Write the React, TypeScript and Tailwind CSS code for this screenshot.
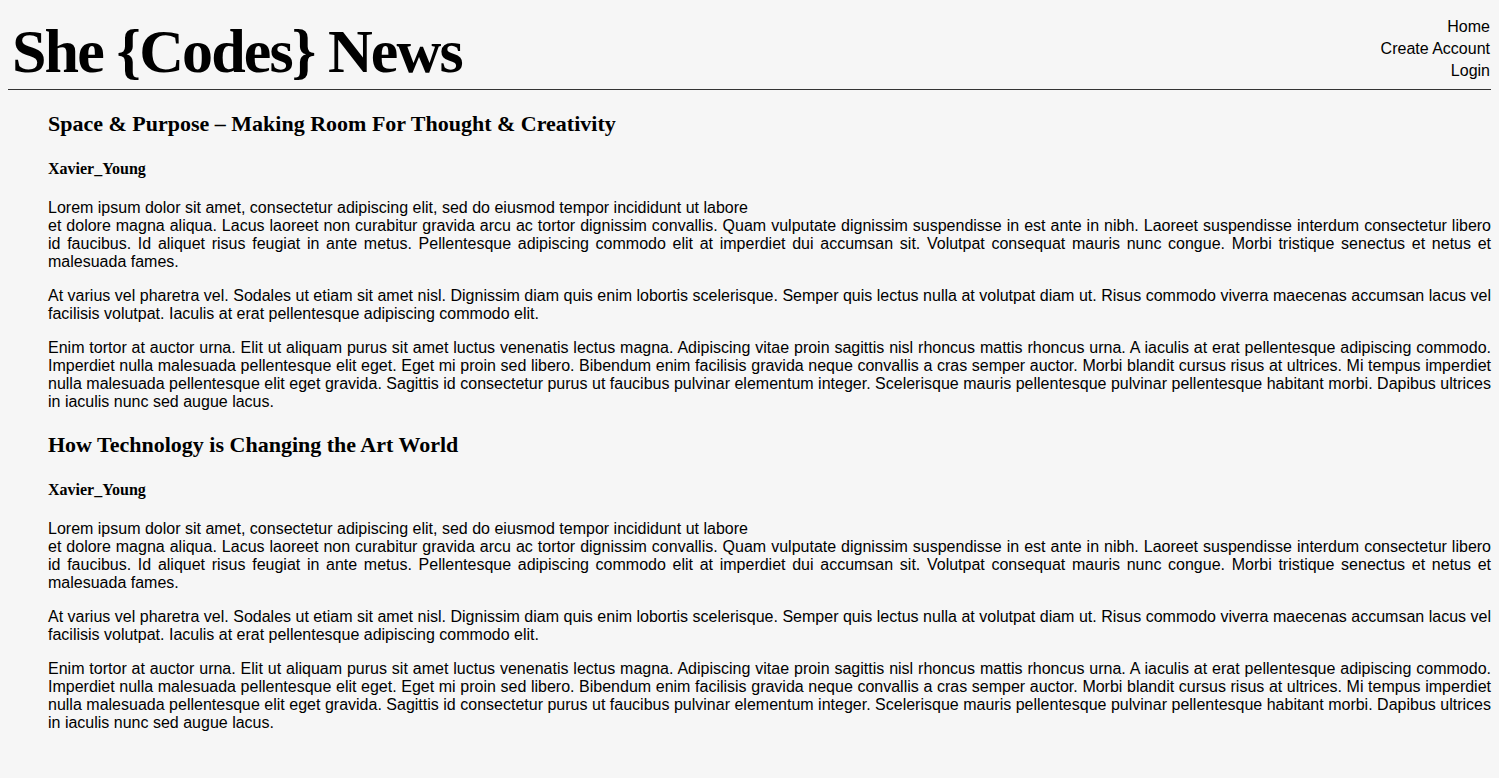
const lorem1a = "Lorem ipsum dolor sit amet, consectetur adipiscing elit, sed do eiusmod tempor incididunt ut labore"
const lorem1b = "et dolore magna aliqua. Lacus laoreet non curabitur gravida arcu ac tortor dignissim convallis. Quam vulputate dignissim suspendisse in est ante in nibh. Laoreet suspendisse interdum consectetur libero id faucibus. Id aliquet risus feugiat in ante metus. Pellentesque adipiscing commodo elit at imperdiet dui accumsan sit. Volutpat consequat mauris nunc congue. Morbi tristique senectus et netus et malesuada fames."
const lorem2 = "At varius vel pharetra vel. Sodales ut etiam sit amet nisl. Dignissim diam quis enim lobortis scelerisque. Semper quis lectus nulla at volutpat diam ut. Risus commodo viverra maecenas accumsan lacus vel facilisis volutpat. Iaculis at erat pellentesque adipiscing commodo elit."
const lorem3 = "Enim tortor at auctor urna. Elit ut aliquam purus sit amet luctus venenatis lectus magna. Adipiscing vitae proin sagittis nisl rhoncus mattis rhoncus urna. A iaculis at erat pellentesque adipiscing commodo. Imperdiet nulla malesuada pellentesque elit eget. Eget mi proin sed libero. Bibendum enim facilisis gravida neque convallis a cras semper auctor. Morbi blandit cursus risus at ultrices. Mi tempus imperdiet nulla malesuada pellentesque elit eget gravida. Sagittis id consectetur purus ut faucibus pulvinar elementum integer. Scelerisque mauris pellentesque pulvinar pellentesque habitant morbi. Dapibus ultrices in iaculis nunc sed augue lacus."

const posts = [
  { id: 1, title: "Space & Purpose – Making Room For Thought & Creativity", author: "Xavier_Young" },
  { id: 2, title: "How Technology is Changing the Art World", author: "Xavier_Young" },
]

const Nav = () => {
  return (
    <nav className="pr-px flex flex-col items-end text-[16px] leading-[22px] text-black font-['Liberation_Sans',Arial,sans-serif]">
      <a href="#">Home</a>
      <a href="#">Create Account</a>
      <a href="#">Login</a>
    </nav>
  )
}

const Post = ({ title, author }: { title: string; author: string }) => {
  return (
    <article>
      <h2 className="mt-[22px] text-[22px] leading-[24px] font-bold font-['Liberation_Serif','Times_New_Roman',serif]">
        {title}
      </h2>
      <h4 className="mt-[24px] text-[16px] leading-[18px] font-bold font-['Liberation_Serif','Times_New_Roman',serif]">
        {author}
      </h4>
      <div className="mt-[21px] text-[16px] leading-[18px] text-justify font-['Liberation_Sans',Arial,sans-serif]">
        <p>
          {lorem1a}
          <br />
          {lorem1b}
        </p>
        <p className="mt-4">{lorem2}</p>
        <p className="mt-4">{lorem3}</p>
      </div>
    </article>
  )
}

const App = () => {
  return (
    <div className="min-h-screen bg-[#f6f6f6] text-black px-2 pt-2 pb-10">
      <header className="h-[82px] flex items-center justify-between border-b border-[#333]">
        <h1 className="pl-1 pt-1 text-[62px] leading-none font-bold tracking-[-0.03em] font-['Liberation_Serif','Times_New_Roman',serif]">
          She {"{"}Codes{"}"} News
        </h1>
        <Nav />
      </header>
      <main className="ml-10">
        {posts.map((p) => (
          <Post key={p.id} title={p.title} author={p.author} />
        ))}
      </main>
    </div>
  )
}

export default App
